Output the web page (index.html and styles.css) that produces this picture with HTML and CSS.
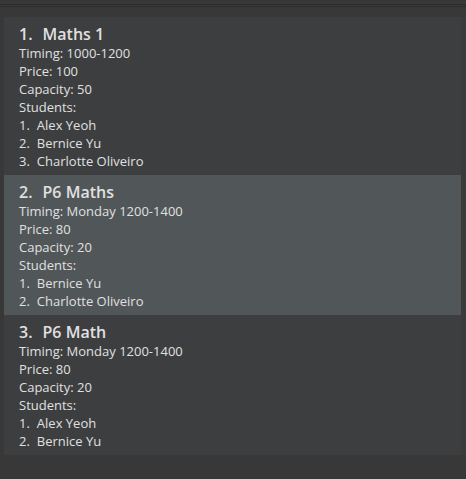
FILE: index.html
```html
<!DOCTYPE html>
<html>
<head>
<meta charset="utf-8">
<link rel="stylesheet" href="styles.css">
</head>
<body>
<div class="topbar"><div class="line"></div><div class="gap"></div><div class="line"></div></div>
<div class="main">
  <div class="list">
    <div class="cell">
      <div class="title"><span class="id">1.</span>Maths 1</div>
      <div class="small">Timing: 1000-1200</div>
      <div class="small">Price: 100</div>
      <div class="small">Capacity: 50</div>
      <div class="small">Students:</div>
      <div class="small"><span class="sid">1.</span>Alex Yeoh</div>
      <div class="small"><span class="sid">2.</span>Bernice Yu</div>
      <div class="small"><span class="sid">3.</span>Charlotte Oliveiro</div>
    </div>
    <div class="cell odd">
      <div class="title"><span class="id">2.</span>P6 Maths</div>
      <div class="small">Timing: Monday 1200-1400</div>
      <div class="small">Price: 80</div>
      <div class="small">Capacity: 20</div>
      <div class="small">Students:</div>
      <div class="small"><span class="sid">1.</span>Bernice Yu</div>
      <div class="small"><span class="sid">2.</span>Charlotte Oliveiro</div>
    </div>
    <div class="cell">
      <div class="title"><span class="id">3.</span>P6 Math</div>
      <div class="small">Timing: Monday 1200-1400</div>
      <div class="small">Price: 80</div>
      <div class="small">Capacity: 20</div>
      <div class="small">Students:</div>
      <div class="small"><span class="sid">1.</span>Alex Yeoh</div>
      <div class="small"><span class="sid">2.</span>Bernice Yu</div>
    </div>
  </div>
  <div class="strip"></div>
</div>
</body>
</html>
```
FILE: styles.css
```css
html, body {
  margin: 0;
  padding: 0;
  background: #383838;
  width: 466px;
  height: 479px;
  overflow: hidden;
  font-family: "Open Sans", "Noto Sans", sans-serif;
  color: #e0e0e0;
}
.topbar {
  height: 17px;
  padding-top: 4px;
  box-sizing: border-box;
}
.topbar .line {
  height: 1px;
  background: #2a2a2a;
}
.topbar .gap {
  height: 1px;
  background: #3c3c3c;
}
.main {
  display: flex;
  padding-left: 4px;
}
.list {
  width: 457px;
  background: #3c3e3f;
}
.strip {
  width: 5px;
  height: 438px;
  background: #3a3a3a;
}
.cell {
  padding: 7px 15px 5px 15px;
  background: #3c3e3f;
}
.cell.odd {
  background: #515658;
}
.title {
  font-size: 16px;
  font-weight: 600;
  line-height: 20px;
  height: 20px;
}
.id {
  margin-right: 10px;
}
.small {
  font-size: 13px;
  line-height: 18px;
  height: 18px;
}
.sid {
  margin-right: 7px;
}
```
